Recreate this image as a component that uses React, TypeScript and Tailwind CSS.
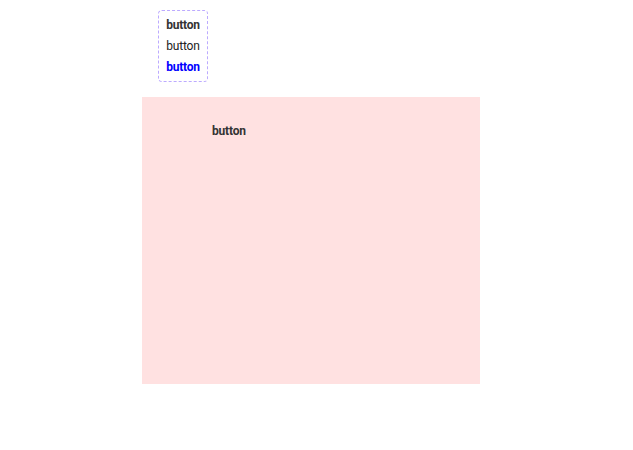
export default function App() {
  const items = [
    { label: "button", className: "font-bold text-[#333333]" },
    { label: "button", className: "font-normal text-[#222222]" },
    { label: "button", className: "font-bold text-[#0000ff]" },
  ];

  return (
    <div className="w-[633px] h-[450px] bg-white font-['Roboto',sans-serif] text-[12px]">
      <div className="pt-[10px] pl-[158px]">
        <div className="w-[50px] h-[72px] border border-dashed border-[#bcaaff] rounded-[4px] flex flex-col items-center justify-center gap-[5px]">
          {items.map((item, index) => (
            <span key={index} className={`leading-[16px] tracking-[-0.2px] ${item.className}`}>
              {item.label}
            </span>
          ))}
        </div>
      </div>
      <div className="ml-[142px] mt-[15px] w-[338px] h-[287px] bg-[#ffe1e1] pt-[25px] pl-[70px]">
        <span className="font-bold text-[#333333] leading-[16px] tracking-[-0.2px]">button</span>
      </div>
    </div>
  );
}
